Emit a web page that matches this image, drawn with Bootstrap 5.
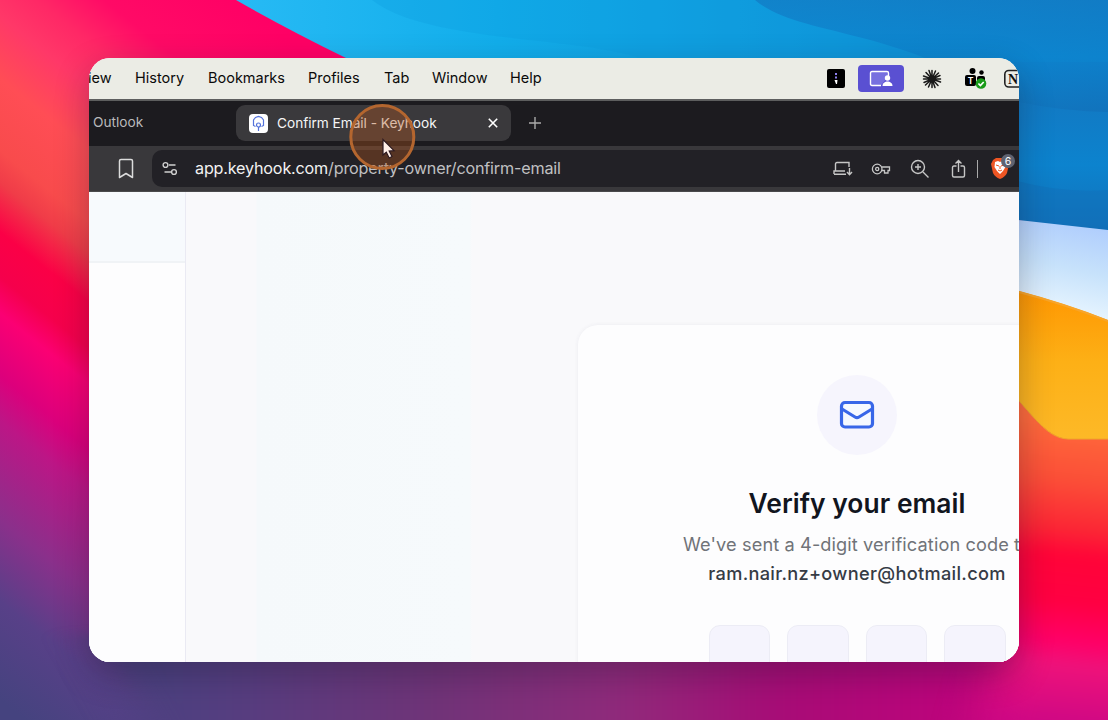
<!DOCTYPE html>
<html lang="en">
<head>
<meta charset="utf-8">
<meta name="viewport" content="width=device-width, initial-scale=1">
<title>Confirm Email - Keyhook</title>
<link href="https://cdn.jsdelivr.net/npm/bootstrap@5.3.0/dist/css/bootstrap.min.css" rel="stylesheet">
<style>
body{width:1108px;height:720px;font-family:Inter,sans-serif;background:#b0006f}
svg{display:block;flex:none}
.wallpaper{position:absolute;inset:0;z-index:0}
.desktop{height:720px;padding:58px 89px}
.window{width:930px;height:604px;border-radius:21px;box-shadow:0 12px 34px rgba(20,20,40,.3);z-index:1;background:#fdfdfe}
.menubar{height:43px;background:#ebece5;border-bottom:2px solid #5d5e5e;color:#0a0a0a;font-size:14.5px;line-height:40px;white-space:nowrap}
.menus{display:grid;grid-template-columns:46px 73px 100px 76px 48px 78px 60px}
.menus .cut{margin-left:-11px}
.tray{width:192px;height:41px}
.tray>*{flex-shrink:0}
.share{width:46px;height:27px;border-radius:4px;background:#5a50d2;margin-left:13px}
.tabstrip{height:45px;background:#1c1b1f;padding-left:4px;font-size:13.7px;color:#b9b9bb}
.other-tab{width:143px;margin-top:-3px}
.active-tab{width:275px;height:36px;border-radius:9px;background:#3a393c;color:#f5f5f5;padding:0 13px;margin-top:-1px}
.tab-title{letter-spacing:-.04px}
.toolbar{height:46px;background:#39383b;border-bottom:1px solid #4a4a4c}
.address{height:37px;margin-left:18px;border-radius:10px 0 0 10px;background:#222126;font-size:16.2px;color:#c0c0c2;padding-left:10px;min-width:0;white-space:nowrap}
.address b{font-weight:400;color:#f2f2f2}
.url{margin-left:17px;letter-spacing:-.2px}
.page{height:470px;background:#f9f9fb}
.side{width:97px;border-right:1px solid #eaeaf3;background:#fdfdfe}
.side-head{height:71px;background:#f7fafd;border-bottom:2px solid #f0f3f6}
.main{background:linear-gradient(90deg,#f9f9fb 70px,#f5f9fb 71px,#f6fafc 284px,#f9f9fb 286px)}
.verify{width:558px;height:470px;margin:133px 0 0 392px;background:#fdfdfe;border-radius:20px;box-shadow:0 0 4px rgba(60,60,100,.07);padding-top:50px}
.halo{width:80px;height:80px;background:#f6f5fd}
.verify h1{font-size:26.4px;font-weight:600;color:#11151e;line-height:34px;margin:31px 0 0;letter-spacing:.05px}
.verify p{font-size:18.2px;line-height:28.5px;color:#707378;margin:10px 0 0;white-space:nowrap;letter-spacing:.1px}
.verify strong{font-weight:500;color:#353b45;letter-spacing:.3px}
.codes{gap:17px;margin-top:38px}
.codes span{width:61.5px;height:66px;border-radius:11px;background:#f5f4fd;border:1px solid #ececf5}
.pointer{position:absolute;left:260px;top:46px}
</style>
</head>
<body class="overflow-hidden">
<svg class="wallpaper" width="1108" height="720" viewBox="0 0 1108 720" aria-hidden="true">
<defs>
<linearGradient id="warm" gradientUnits="userSpaceOnUse" x1="97.6" y1="-122" x2="-341.5" y2="426.8">
<stop offset="0" stop-color="#ff0065"/><stop offset=".13" stop-color="#ff0a66"/><stop offset=".19" stop-color="#ff2866"/><stop offset=".24" stop-color="#ff3868"/><stop offset=".31" stop-color="#ff4d55"/><stop offset=".39" stop-color="#f84b4c"/><stop offset=".425" stop-color="#f03c48"/><stop offset=".48" stop-color="#fb0046"/><stop offset=".53" stop-color="#f5004c"/><stop offset=".57" stop-color="#fb0073"/><stop offset=".64" stop-color="#dc007c"/><stop offset=".69" stop-color="#bc1686"/><stop offset=".80" stop-color="#8a308b"/><stop offset=".89" stop-color="#584088"/><stop offset="1" stop-color="#45437f"/>
</linearGradient>
<linearGradient id="floor"><stop offset="0" stop-color="#45437f"/><stop offset=".12" stop-color="#543e80"/><stop offset=".3" stop-color="#6e3478"/><stop offset=".48" stop-color="#902a7b"/><stop offset=".62" stop-color="#a70c76"/><stop offset=".78" stop-color="#bd047c"/><stop offset=".92" stop-color="#d6087f"/><stop offset="1" stop-color="#f0087f"/></linearGradient>
<linearGradient id="east" gradientUnits="userSpaceOnUse" x1="1070" y1="420" x2="1040" y2="720"><stop offset="0" stop-color="#ff6b3b"/><stop offset=".2" stop-color="#fb4e37"/><stop offset=".36" stop-color="#fb2635"/><stop offset=".45" stop-color="#ff0438"/><stop offset=".6" stop-color="#ff0042"/><stop offset=".73" stop-color="#ff0067"/><stop offset=".81" stop-color="#ee127a"/><stop offset="1" stop-color="#cf0884"/></linearGradient>
<linearGradient id="sky"><stop offset="0" stop-color="#27baf4"/><stop offset=".3" stop-color="#12aeeb"/><stop offset=".7" stop-color="#0f94d8"/><stop offset="1" stop-color="#1078c3"/></linearGradient>
<linearGradient id="ice" gradientUnits="userSpaceOnUse" x1="1080" y1="222" x2="1060" y2="315"><stop offset="0" stop-color="#afcdfd"/><stop offset=".5" stop-color="#c7e2fb"/><stop offset="1" stop-color="#e9f6ff"/></linearGradient>
<linearGradient id="gold" x2="0" y2="1"><stop offset="0" stop-color="#ff9500"/><stop offset=".5" stop-color="#fdb016"/><stop offset="1" stop-color="#fdb927"/></linearGradient>
<linearGradient id="deep" x2="0" y2="1"><stop offset="0" stop-color="#1279c3"/><stop offset=".5" stop-color="#0c83ce"/><stop offset="1" stop-color="#1270b9"/></linearGradient>
<filter id="soft" x="-20%" y="-60%" width="140%" height="220%" color-interpolation-filters="sRGB"><feGaussianBlur stdDeviation="22 5"/></filter>
</defs>
<rect width="700" height="720" fill="url(#warm)"/>
<path d="M90 635H1200V800H180Z" fill="url(#floor)" filter="url(#soft)"/>
<path d="M960 380H1200V800H960L1000 655Z" fill="url(#east)" filter="url(#soft)"/>
<path d="M236 0Q285 28 346 58L500 130H1108V0Z" fill="url(#sky)"/>
<path d="M372 0C430 45 590 35 650 62H1108V0Z" fill="#0d9add" opacity=".3"/>
<path d="M755 0C800 38 900 25 1019 108L1108 114V0Z" fill="url(#deep)" opacity=".7"/>
<path d="M1000 98Q1060 112 1108 112V232L1000 218Z" fill="url(#deep)"/>
<path d="M1000 176Q1055 194 1108 190V231L1000 219Z" fill="#116db7" opacity=".4"/>
<path d="M1000 218L1108 230V330H1000Z" fill="url(#ice)"/>
<path d="M1000 286Q1060 301 1108 320V439H1068C1046 437 1034 416 1000 380Z" fill="url(#gold)"/>
<path d="M1000 287Q1060 302 1108 321" fill="none" stroke="#f8a52a" stroke-width="2"/>
<path d="M1003 383C1034 416 1046 438 1068 439H1108" fill="none" stroke="#efa72a"/>
</svg>
<div class="desktop">
<div class="window position-relative overflow-hidden">
<div class="menubar d-flex justify-content-between">
<div class="menus"><span class="cut">View</span><span>History</span><span>Bookmarks</span><span>Profiles</span><span>Tab</span><span>Window</span><span>Help</span></div>
<div class="tray d-flex align-items-center">
<svg width="18" height="19" viewBox="0 0 18 19"><rect width="18" height="19" rx="2"/><path d="M9 4v2M9 7.500v2" stroke="#8d80ee" stroke-width="2"/><path d="M7.500 11h3l-.5 4H9z" fill="#fff"/></svg>
<div class="share d-flex align-items-center justify-content-center"><svg width="24" height="18" viewBox="0 0 24 18"><path d="M12 15.500H3Q1.500 15.500 1.500 14V3Q1.500 1.500 3 1.500H18Q19.500 1.500 19.500 3V6" fill="#7770df" stroke="#fff" stroke-width="1.400"/><circle cx="18.500" cy="8" r="2.700" fill="#fff"/><path d="M13.500 16c0-6 10-6 10 0z" fill="#fff"/></svg></div>
<svg width="22" height="22" viewBox="-11 -11 22 22" style="margin-left:17px" stroke="#191919" stroke-width="1.500" stroke-linecap="round"><path d="M0-8.500V8.500M-8.500 0H8.500M-6-6.500L6 6.500M6.500-6L-6.500 6M-3-8.500L3 8.500M3.500-8L-3.500 8M-8.500-3L8.500 3M8-3.500L-8 3.500"/></svg>
<svg width="22" height="23" viewBox="0 0 22 23" style="margin-left:22px"><circle cx="7.500" cy="4" r="3"/><circle cx="16.500" cy="5.500" r="2.200"/><rect x="12" y="9" width="8" height="9" rx="2"/><rect x="0" y="8" width="11" height="11" rx="2"/><text x="5.500" y="16.700" text-anchor="middle" fill="#fff" font-family="Inter" font-size="8.500" font-weight="700">T</text><circle cx="16" cy="16.500" r="5.300" fill="#1a9b19"/><path d="M13.400 16.500l2 2 3.300-3.500" fill="none" stroke="#fff" stroke-width="1.700"/></svg>
<svg width="22" height="20" viewBox="0 0 22 20" style="margin-left:16px"><rect x="1.800" y="1.500" width="19" height="16.500" rx="4" fill="none" stroke="#222" stroke-width="1.600"/><text x="5" y="14.500" font-family="Liberation Serif,serif" font-weight="700" font-size="14" fill="#111">N</text></svg>
</div></div>
<div class="tabstrip d-flex align-items-center">
<div class="other-tab">Outlook</div>
<div class="active-tab d-flex align-items-center">
<svg width="19" height="19" viewBox="0 0 19 19"><rect width="19" height="19" rx="4" fill="#fff"/><path d="M6.500 12.500L4.500 11.500V6L6.500 3.500 9.500 2.500 12.500 3.500 14.500 6V11.500L12.500 12.500M9.500 13V17" fill="none" stroke="#5573db" stroke-width="1.200"/><circle cx="9.500" cy="11" r="2" fill="none" stroke="#5573db" stroke-width="1.200"/></svg>
<span class="tab-title ms-2 ps-1 flex-grow-1" style="padding-left:1px!important">Confirm Email - Keyhook</span>
<svg width="10" height="10" viewBox="0 0 10 10" stroke="#fff" stroke-width="1.600"><path d="M.8.8l8.400 8.400M9.200.8L.8 9.200"/></svg>
</div>
<svg width="12" height="12" viewBox="0 0 12 12" stroke="#aaa" stroke-width="1.400" style="margin:-2px 0 0 18px"><path d="M6 0V12M0 6H12"/></svg>
</div>
<div class="toolbar d-flex align-items-center">
<svg width="16" height="21" viewBox="0 0 16 21" style="margin-left:29px" fill="none" stroke="#dcdcdc" stroke-width="1.500" stroke-linejoin="round"><path d="M1.500 3Q1.500 1.500 3 1.500H13Q14.500 1.500 14.500 3V19.500L8 15.500 1.500 19.500Z"/></svg>
<div class="address d-flex align-items-center flex-grow-1">
<svg width="16" height="15" viewBox="0 0 16 15" fill="none" stroke="#d0d0d0" stroke-width="1.400"><circle cx="3.500" cy="4" r="2.400"/><path d="M7 4H13.500M2.500 11H9"/><circle cx="12" cy="11" r="2.400"/></svg>
<span class="url flex-grow-1"><b>app.keyhook.com</b>/property-owner/confirm-email</span>
<div class="d-flex align-items-center flex-shrink-0 position-relative" style="width:186px">
<svg width="20" height="16" viewBox="0 0 20 16" fill="none" stroke="#c6c6c6" stroke-width="1.400"><path d="M2.500 10V3Q2.500 1.500 4 1.500H16V6M1 13.300H13M1 13V10H12M16.500 7V13.500M14 11L16.500 13.700 19 11"/></svg>
<svg width="20" height="16" viewBox="0 0 20 16" style="margin-left:18px" fill="none" stroke="#c6c6c6" stroke-width="1.300"><circle cx="6.200" cy="8" r="4.800"/><circle cx="6.200" cy="8" r="1.600"/><path d="M10.500 6H18.500V9.500H17V12H13.500V9.500H10.500"/></svg>
<svg width="20" height="20" viewBox="0 0 20 20" style="margin-left:19px" fill="none" stroke="#c6c6c6" stroke-width="1.400"><circle cx="8" cy="8" r="6.500"/><path d="M13 13L18.500 18.500M8 5V11M5 8H11"/></svg>
<svg width="16" height="20" viewBox="0 0 16 20" style="margin-left:21px" fill="none" stroke="#c6c6c6" stroke-width="1.400"><path d="M5.500 7H3Q1.500 7 1.500 8.500V16.500Q1.500 18 3 18H12Q13.500 18 13.500 16.500V8.500Q13.500 7 12 7H9.500M7.500 13V1.500M4.500 4.500L7.500 1.500 10.500 4.500"/></svg>
<div style="width:1px;height:18px;margin-left:10px;background:#aaa"></div>
<svg width="28" height="28" viewBox="0 0 28 28" style="margin:-1px 0 0 11px"><path d="M4 6L7 4H15L18 6 20 10 18 19Q16 23 11 25 6 23 4 19L2 10Z" fill="#ee5523"/><path d="M6 8L9 7 11 8 13 7 16 8 16.500 13 14 17 11 20 8 17 5.500 13Z" fill="#fff"/><path d="M7 11l3 1M15 11l-3 1M11 12v3M9 16l2 1 2-1" stroke="#ee5523" fill="none"/><circle cx="19" cy="7" r="7" fill="#5f6370"/><text x="19" y="10.700" text-anchor="middle" fill="#fff" font-family="Inter" font-size="10.500">6</text></svg>
</div></div></div>
<div class="page d-flex overflow-hidden">
<aside class="side flex-shrink-0"><div class="side-head"></div></aside>
<main class="main flex-grow-1 overflow-hidden">
<section class="verify d-flex flex-column align-items-center">
<div class="halo rounded-circle d-flex align-items-center justify-content-center flex-shrink-0"><svg width="36" height="30" viewBox="0 0 36 30" fill="none" stroke="#3867e8" stroke-width="3.200" stroke-linecap="round" stroke-linejoin="round"><rect x="2.500" y="2.500" width="31" height="24.500" rx="3.500" fill="#f5f9ff"/><path d="M3 9L16 17Q18 18.200 20 17L33 9"/></svg></div>
<h1>Verify your email</h1>
<p class="text-center"><span class="sent">We've sent a 4-digit verification code to</span><br><strong>ram.nair.nz+owner@hotmail.com</strong></p>
<div class="codes d-flex"><span></span><span></span><span></span><span></span></div>
</section></main></div>
<svg class="pointer" width="68" height="68" viewBox="0 0 68 68"><circle cx="33.300" cy="33" r="31.500" fill="#b5561e" fill-opacity=".36" stroke="#b4662f" stroke-width="3"/><path d="M34 35.500V51L37.300 48.200 40.200 54 43 52.500 40.200 47 45 46.700Z" fill="#fff0e8" stroke="#2d1a20" stroke-width="1.200"/></svg>
</div></div>
<script src="https://cdn.jsdelivr.net/npm/bootstrap@5.3.0/dist/js/bootstrap.bundle.min.js"></script>
</body>
</html>
